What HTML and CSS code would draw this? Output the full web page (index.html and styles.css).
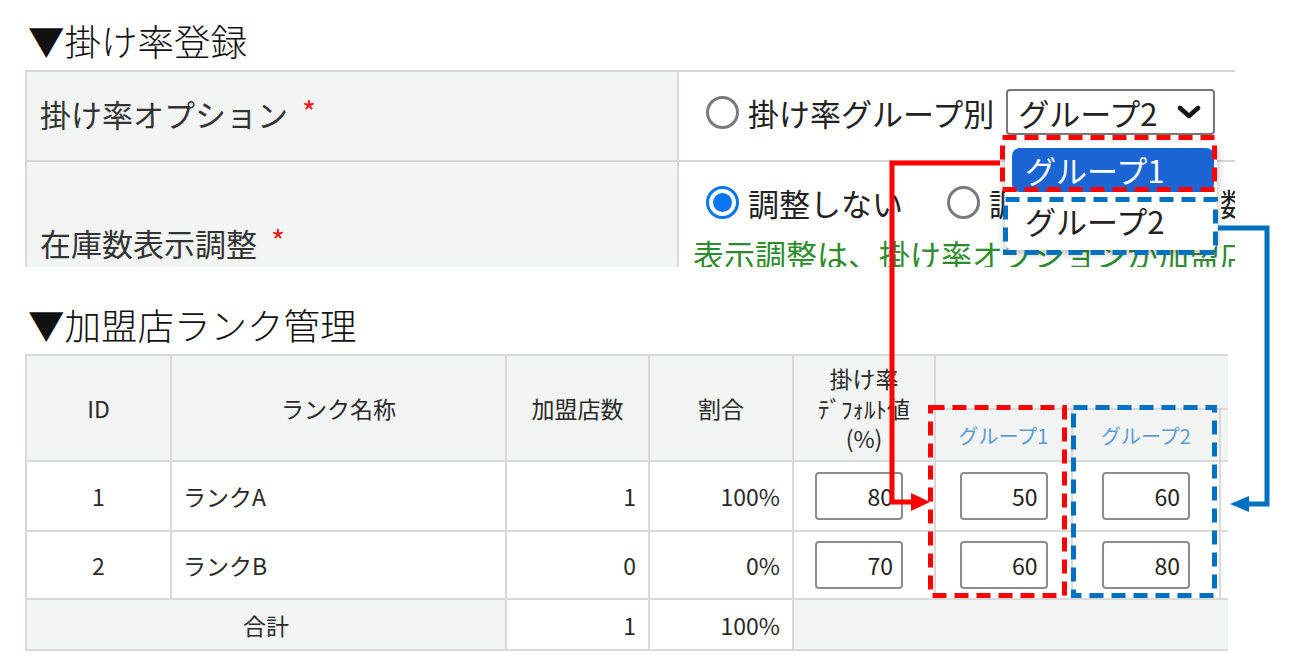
FILE: index.html
```html
<!DOCTYPE html>
<html lang="ja">
<head>
<meta charset="utf-8">
<title>掛け率登録</title>
<link rel="stylesheet" href="styles.css">
</head>
<body>
<div class="page">
  <h2 class="title">▼掛け率登録</h2>
  <div class="form">
    <div class="frow r1">
      <div class="flabel">掛け率オプション<span class="req">*</span></div>
      <div class="fval">
        <span class="radio"></span><span class="otext">掛け率グループ別</span>
        <div class="select"><span>グループ2</span><svg class="chev" width="24" height="14" viewBox="0 0 24 14"><polyline points="3,3 12,11 21,3" fill="none" stroke="#111" stroke-width="4.5" stroke-linecap="round" stroke-linejoin="round"/></svg></div>
      </div>
    </div>
    <div class="frow r2">
      <div class="flabel">在庫数表示調整<span class="req">*</span></div>
      <div class="fval col">
        <div class="opts">
          <span class="radio on"></span><span class="otext">調整しない</span>
          <span class="radio gap"></span><span class="otext">調整する</span><span class="numbox"></span><span class="otext">数</span>
        </div>
        <div class="note">表示調整は、掛け率オプションが加盟店ランク別の場合のみ有効です。</div>
      </div>
    </div>
  </div>

  <h2 class="title t2">▼加盟店ランク管理</h2>
  <div class="tablewrap">
    <table class="rank">
      <colgroup>
        <col class="c1"><col class="c2"><col class="c3"><col class="c4"><col class="c5"><col class="c6"><col class="c7"><col class="c8">
      </colgroup>
      <thead>
        <tr class="h1">
          <th rowspan="2">ID</th>
          <th rowspan="2">ランク名称</th>
          <th rowspan="2">加盟店数</th>
          <th rowspan="2">割合</th>
          <th rowspan="2" class="small">掛け率<br>ﾃﾞﾌｫﾙﾄ値<br>(%)</th>
          <th colspan="3"></th>
        </tr>
        <tr class="h2">
          <th class="grp">グループ1</th>
          <th class="grp">グループ2</th>
          <th></th>
        </tr>
      </thead>
      <tbody>
        <tr class="b1">
          <td class="ctr">1</td>
          <td class="name">ランクA</td>
          <td class="num">1</td>
          <td class="num">100%</td>
          <td><input class="inp def" type="text" value="80"></td>
          <td><input class="inp" type="text" value="50"></td>
          <td><input class="inp" type="text" value="60"></td>
          <td></td>
        </tr>
        <tr class="b2">
          <td class="ctr">2</td>
          <td class="name">ランクB</td>
          <td class="num">0</td>
          <td class="num">0%</td>
          <td><input class="inp def" type="text" value="70"></td>
          <td><input class="inp" type="text" value="60"></td>
          <td><input class="inp" type="text" value="80"></td>
          <td></td>
        </tr>
        <tr class="tot">
          <td colspan="2" class="ctr gray">合計</td>
          <td class="num">1</td>
          <td class="num">100%</td>
          <td colspan="4" class="gray"></td>
        </tr>
      </tbody>
    </table>
  </div>
</div>

<div class="dropdown">
  <div class="option sel">グループ1</div>
  <div class="option">グループ2</div>
</div>

<svg class="overlay" width="1304" height="671" viewBox="0 0 1304 671">
  <g fill="none" stroke-width="5" stroke-dasharray="14 8">
    <rect x="1002.5" y="137.5" width="212" height="52" stroke="#ff0000"/>
    <rect x="1005.5" y="199.5" width="210" height="53" stroke="#0070c0"/>
    <rect x="930.5" y="407.5" width="134" height="188" stroke="#ff0000"/>
    <rect x="1073.5" y="407.5" width="141" height="188" stroke="#0070c0"/>
  </g>
  <polyline points="1000,163 892,163 892,502 914,502" fill="none" stroke="#ff0000" stroke-width="5"/>
  <polygon points="911,493 930,502 911,511" fill="#ff0000"/>
  <polyline points="1218,228 1267,228 1267,504 1246,504" fill="none" stroke="#0070c0" stroke-width="5"/>
  <polygon points="1249,496 1230,504 1249,512" fill="#0070c0"/>
</svg>
</body>
</html>
```

FILE: styles.css
```css
body {
  margin: 0;
  background: #fff;
  font-family: "Noto Sans CJK JP", "Noto Sans", sans-serif;
  color: #333;
}

.page {
  padding: 18px 0 0 25px;
}

.title {
  margin: 0 0 6px 3px;
  font-size: 36.5px;
  font-weight: 300;
  line-height: 46px;
  color: #111;
}

.t2 {
  margin-top: 35px;
}

/* ---------- top form ---------- */
.form {
  width: 1210px;
  height: 197px;
  overflow: hidden;
  box-sizing: border-box;
  border-top: 2px solid #d6d6d6;
  border-left: 2px solid #d6d6d6;
}

.frow {
  display: flex;
  border-bottom: 2px solid #d6d6d6;
}

.r1 { height: 88px; }
.r2 { height: 160px; }

.flabel {
  width: 652px;
  flex: none;
  box-sizing: border-box;
  background: #f3f4f4;
  border-right: 2px solid #d6d6d6;
  display: flex;
  align-items: center;
  padding-left: 13px;
  font-size: 31px;
  color: #333;
}

.r1 .flabel { padding-bottom: 6px; }

.req {
  color: #f01818;
  font-size: 30px;
  line-height: 1;
  margin-left: 14px;
  position: relative;
  top: -2px;
}

.fval {
  flex: 1;
  display: flex;
  align-items: center;
  padding-left: 27px;
  font-size: 31px;
  color: #222;
  white-space: nowrap;
}

.r1 .fval { padding-bottom: 8px; }

.fval.col {
  flex-direction: column;
  align-items: flex-start;
  padding-top: 20px;
  overflow: hidden;
}

.radio {
  width: 33px;
  height: 33px;
  flex: none;
  box-sizing: border-box;
  border-radius: 50%;
  border: 3px solid #7a7a7a;
  background: #fff;
  display: inline-block;
  position: relative;
}

.radio.on {
  border-color: #0b76f0;
}

.radio.on::after {
  content: "";
  position: absolute;
  inset: 4px;
  border-radius: 50%;
  background: #0b76f0;
}

.radio.gap { margin-left: 44px; }

.otext { margin-left: 9px; }

.select {
  margin-left: 12px;
  width: 209px;
  height: 46px;
  box-sizing: border-box;
  border: 2px solid #767676;
  border-radius: 4px;
  display: flex;
  align-items: center;
  justify-content: space-between;
  padding: 0 12px 0 10px;
  font-size: 31px;
  color: #222;
}

.opts {
  display: flex;
  align-items: center;
  height: 40px;
}

.numbox {
  display: inline-block;
  width: 90px;
  height: 52px;
  box-sizing: border-box;
  border: 2px solid #9a9a9a;
  border-radius: 4px;
  margin-left: 8px;
}

.note {
  margin-top: 12px;
  margin-left: -13px;
  line-height: 40px;
  color: #2e8b2e;
  white-space: nowrap;
}

/* ---------- rank table ---------- */
.tablewrap {
  width: 1203px;
  overflow: hidden;
}

.rank {
  border-collapse: collapse;
  table-layout: fixed;
  width: 1394px;
  font-size: 23px;
  color: #2a2a2a;
}

.c1 { width: 145px; }
.c2 { width: 335px; }
.c3 { width: 143px; }
.c4 { width: 144px; }
.c5 { width: 142px; }
.c6 { width: 137px; }
.c7 { width: 148px; }
.c8 { width: 200px; }

.rank th,
.rank td {
  border: 2px solid #d9d9d9;
  padding: 0;
}

.rank th {
  background: #f3f4f4;
  font-weight: 400;
  text-align: center;
  vertical-align: middle;
}

.h1 { height: 54px; }
.h2 { height: 52px; }
.b1 { height: 70px; }
.b2 { height: 68px; }
.tot { height: 51px; }

.small {
  font-size: 23px;
  line-height: 30px;
}

.grp {
  font-size: 20px;
  color: #5b9bd5;
}

.ctr { text-align: center; }
.name { text-align: left; padding-left: 11px !important; }
.num { text-align: right; padding-right: 12px !important; }
.gray { background: #f3f4f4; }

.inp {
  display: block;
  margin: 0 auto;
  width: 88px;
  height: 48px;
  box-sizing: border-box;
  border: 2px solid #8c8c8c;
  border-radius: 4px;
  text-align: right;
  padding: 0 8px 0 0;
  font-family: "Noto Sans CJK JP", "Noto Sans", sans-serif;
  font-size: 23px;
  color: #222;
  background: #fff;
}

.inp.def {
  margin-left: 21px;
}

/* ---------- dropdown popup (overlay) ---------- */
.dropdown {
  position: absolute;
  left: 1005px;
  top: 142px;
  width: 212px;
  box-sizing: border-box;
  padding: 6px 3px 5px 7px;
  background: #fff;
  border-radius: 8px;
  box-shadow: 0 3px 10px rgba(0, 0, 0, 0.28);
}

.option {
  height: 48px;
  line-height: 48px;
  padding-left: 13px;
  font-size: 31px;
  color: #222;
  border-radius: 8px;
  white-space: nowrap;
}

.option.sel {
  height: 44px;
  line-height: 44px;
  margin-bottom: 5px;
  background: #1a64d4;
  color: #fff;
}

.overlay {
  position: absolute;
  left: 0;
  top: 0;
  pointer-events: none;
}
```
